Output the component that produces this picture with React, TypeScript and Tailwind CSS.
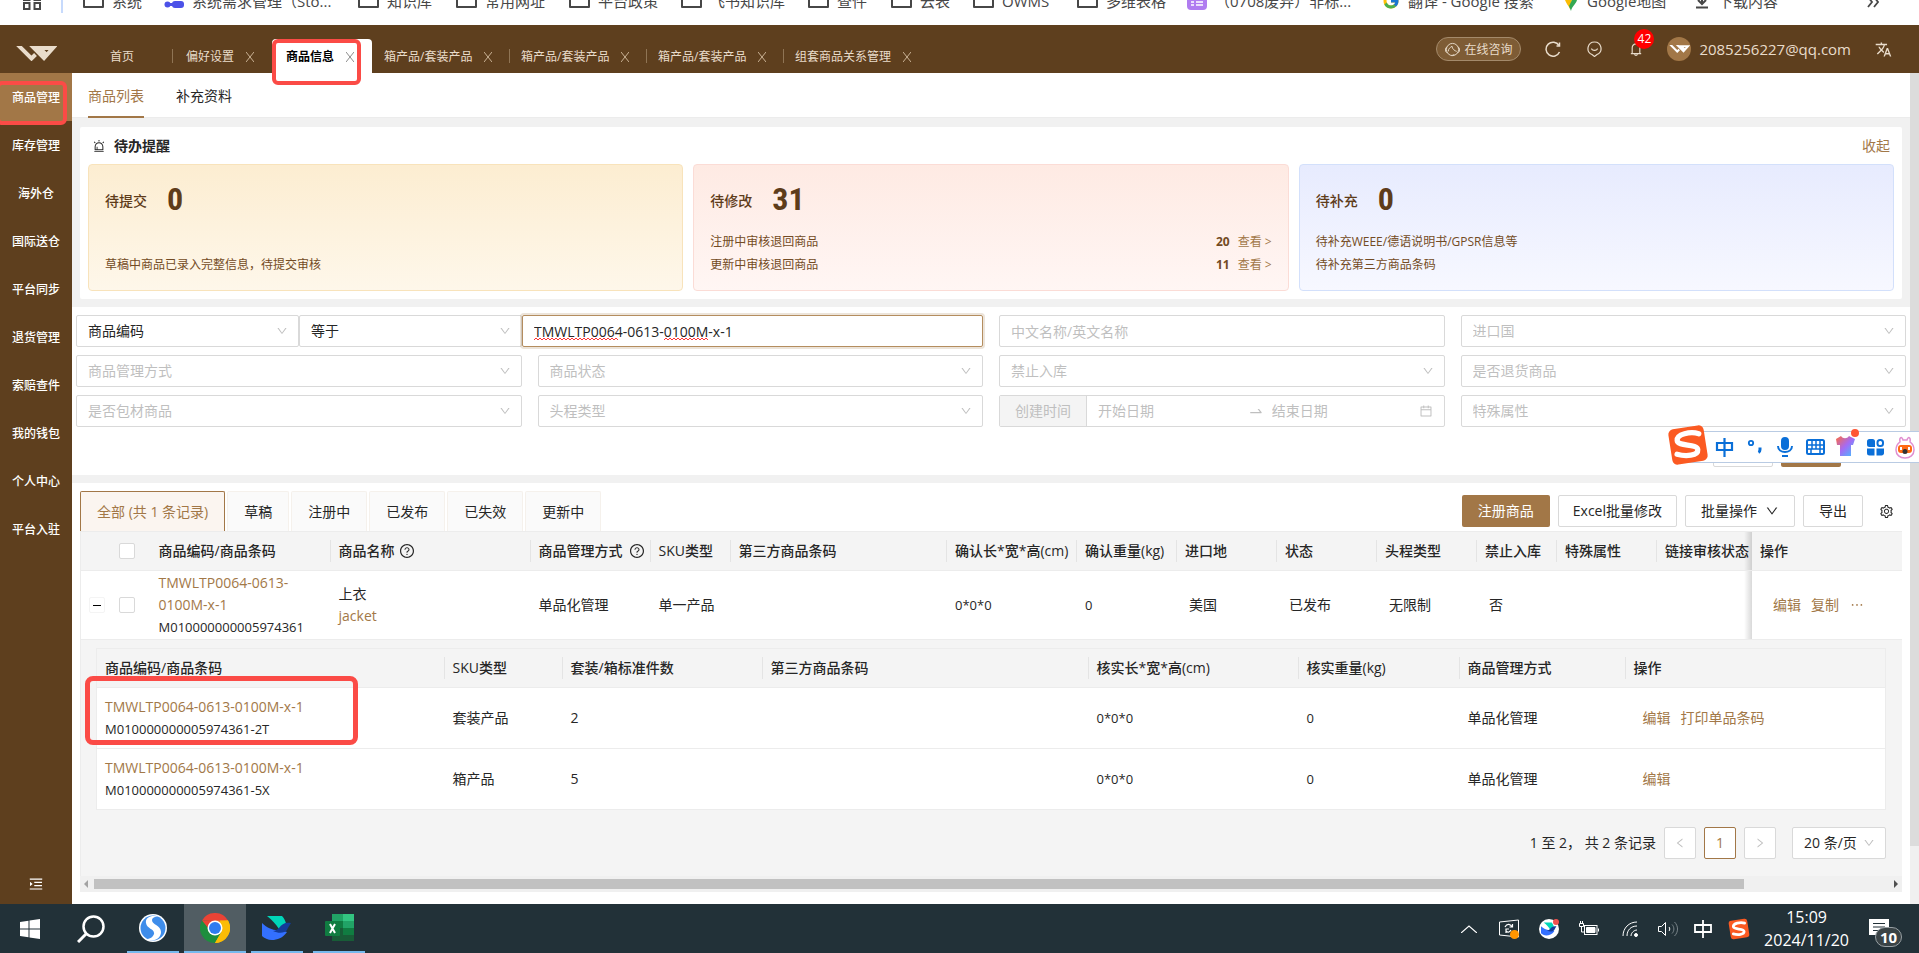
import type { ReactNode } from 'react';
import {
  AiOutlineAlert,
  AiOutlineBell,
  AiOutlineCalendar,
  AiOutlineDown,
  AiOutlineEllipsis,
  AiOutlineLeft,
  AiOutlineMenuUnfold,
  AiOutlineQuestionCircle,
  AiOutlineRight,
  AiOutlineSetting,
  AiOutlineSwapRight,
} from 'react-icons/ai';
import { FcGoogle } from 'react-icons/fc';
import { MdTranslate } from 'react-icons/md';

const sideMenu = [
  '商品管理', '库存管理', '海外仓', '国际送仓', '平台同步',
  '退货管理', '索赔查件', '我的钱包', '个人中心', '平台入驻',
];

const bookmarks = [
  { label: '系统', icon: 'folder', width: 'w-[81px]' },
  { label: '系统需求管理（Sto...', icon: 'flow', width: 'w-[194px]' },
  { label: '知识库', icon: 'folder', width: 'w-[98px]' },
  { label: '常用网址', icon: 'folder', width: 'w-[113px]' },
  { label: '平台政策', icon: 'folder', width: 'w-[112px]' },
  { label: '飞书知识库', icon: 'folder', width: 'w-[127px]' },
  { label: '查件', icon: 'folder', width: 'w-[83px]' },
  { label: '云表', icon: 'folder', width: 'w-[82px]' },
  { label: 'OWMS', icon: 'folder', width: 'w-[104px]' },
  { label: '多维表格', icon: 'folder', width: 'w-[110px]' },
  { label: '（0708废弃）非标...', icon: 'sheet', width: 'w-[195px]' },
  { label: '翻译 - Google 搜索', icon: 'google', width: 'w-[181px]' },
  { label: 'Google地图', icon: 'maps', width: 'w-[131px]' },
  { label: '下载内容', icon: 'download', width: 'w-[110px]' },
];

const pageTabs = [
  { label: '偏好设置', wide: false },
  { label: '商品信息', wide: false, active: true },
  { label: '箱产品/套装产品', wide: true },
  { label: '箱产品/套装产品', wide: true, divider: true },
  { label: '箱产品/套装产品', wide: true, divider: true },
  { label: '组套商品关系管理', wide: true, divider: true },
];

const statusTabs = ['全部 (共 1 条记录)', '草稿', '注册中', '已发布', '已失效', '更新中'];

const childRows = [
  { code: 'TMWLTP0064-0613-0100M-x-1', barcode: 'M010000000005974361-2T', type: '套装产品', count: '2', print: true },
  { code: 'TMWLTP0064-0613-0100M-x-1', barcode: 'M010000000005974361-5X', type: '箱产品', count: '5', print: false },
];

function BookmarkIcon({ name }: { name: string }) {
  if (name === 'google') return <FcGoogle className="size-[18px] shrink-0" />;
  if (name === 'flow') {
    return (
      <svg className="w-5 h-5 shrink-0" viewBox="0 0 20 20" fill="#4c52e8">
        <circle cx="3.5" cy="13.5" r="3" />
        <path d="M5 12h4v3H5z" />
        <rect x="8" y="10" width="12" height="7" rx="3" />
      </svg>
    );
  }
  if (name === 'sheet') {
    return (
      <svg className="w-5 h-5 shrink-0" viewBox="0 0 20 20">
        <rect width="20" height="19" rx="4" fill="#b07cf0" />
        <path d="M4 11h3M9 11h7M4 14h3M9 14h7" stroke="#fff" strokeWidth="1.6" />
      </svg>
    );
  }
  if (name === 'maps') {
    return (
      <svg className="w-4 h-5 shrink-0" viewBox="0 0 16 20">
        <path d="M2 9h7L7 18C5 14 3 12 2 9z" fill="#fbbc04" />
        <path d="M9 9h5c-1 4-5 6-6 11l-2-5z" fill="#34a853" />
      </svg>
    );
  }
  if (name === 'download') {
    return (
      <svg className="w-4 h-5 shrink-0" viewBox="0 0 16 20" fill="none" stroke="#474747" strokeWidth="2">
        <path d="M8 4v9M4 9l4 4 4-4M2 16.500h12" />
      </svg>
    );
  }
  return (
    <svg className="w-[21px] h-5 shrink-0" viewBox="0 0 21 20" fill="none" stroke="#474747" strokeWidth="2">
      <path d="M1 3h7l2 2h10v11H1z" strokeLinejoin="round" />
    </svg>
  );
}

function BrandMark({ className }: { className: string }) {
  return (
    <svg className={className} viewBox="0 0 42 15" fill="none" stroke="currentColor" strokeWidth="4">
      <path d="M1 -3L16.500 12.500L20.500 8.500" />
      <path d="M14 -3L29 12L38 2H24.500L31 8.500" />
    </svg>
  );
}

function CloseIcon({ className }: { className: string }) {
  return (
    <svg className={className} viewBox="0 0 8 10" fill="none" stroke="currentColor" strokeWidth="1">
      <path d="M0 0l8 10M8 0L0 10" />
    </svg>
  );
}

function SogouLogo({ className }: { className: string }) {
  return (
    <svg className={className} viewBox="0 0 40 40">
      <rect x="3" y="3" width="34" height="34" rx="5" fill="#fb5a22" transform="rotate(-9 20 20)" />
      <path
        d="M31 10C23 7 10 9 10 15c0 6 19 4 19 10 0 6-12 6-20 3"
        fill="none"
        stroke="#fff"
        strokeWidth="5"
        strokeLinecap="round"
        transform="rotate(-4 20 20)"
      />
    </svg>
  );
}

function FeishuMark({ className }: { className: string }) {
  return (
    <svg className={className} viewBox="0 0 30 26">
      <path d="M5 1h15c2 2 4 6 4 8l-7 5C14 9 10 5 5 1z" fill="#00d6b9" />
      <path d="M0 8c5 5 12 8 18 7l7 2c-4 6-10 8-15 8-4 0-8-2-10-4z" fill="#3370ff" />
      <path d="M29 8c-6-1-9 1-12 5-2 2-4 3-6 3 6 3 12 2 14-1 1-3 3-5 4-7z" fill="#133c9a" />
    </svg>
  );
}

function Select({ label, value, className = '' }: { label: string; value?: string; className?: string }) {
  return (
    <div className={`relative h-8 ${className}`}>
      <select
        aria-label={label}
        className={`block w-full h-full appearance-none border border-[#d9d9d9] rounded-[2px] bg-white pl-[11px] pr-6 text-sm ${
          value ? 'text-[#262626]' : 'text-[#bfbfbf]'
        }`}
      >
        <option>{value ?? label}</option>
      </select>
      <AiOutlineDown className="absolute right-[11px] top-[10px] size-3 text-[#bfbfbf] pointer-events-none" />
    </div>
  );
}

function TodoCard({ title, count, className, children }: { title: string; count: string; className: string; children: ReactNode }) {
  return (
    <div className={`h-[127px] rounded-[4px] border bg-linear-to-b px-4 pt-3.5 pb-3.5 flex flex-col justify-between ${className}`}>
      <div className="h-10 flex items-center gap-5 text-[#5e3c1a]">
        <span className="text-sm font-medium pt-1">{title}</span>
        <span className="font-['Roboto_Condensed','Liberation_Sans_Narrow','Open_Sans_Condensed','Roboto'] text-[32px] font-bold leading-10">{count}</span>
      </div>
      <ul className="text-xs leading-[23px] text-[#734b24]">{children}</ul>
    </div>
  );
}

function Th({ children, last = false }: { children?: ReactNode; last?: boolean }) {
  return (
    <th className="p-0 border-y border-[#ececec] bg-[#f4f4f4] font-medium text-left">
      <div className={`h-[22px] my-2 px-2 leading-[22px] whitespace-nowrap flex items-center gap-1 ${last ? '' : 'border-r border-[#e4e4e4]'}`}>
        {children}
      </div>
    </th>
  );
}

// Shade cast by the pinned action column onto the cells left of it
function PinnedShade() {
  return <span className="absolute -left-2 top-0 w-2 h-full bg-linear-to-l from-black/15 to-transparent pointer-events-none" />;
}

function TopBar() {
  return (
    <header className="h-12 bg-[#5e3f1e] text-[#e9dccb] flex">
      <div className="w-[72px] shrink-0 flex items-center justify-center">
        <BrandMark className="w-[42px] h-[15px] mt-2" />
      </div>
      <nav className="flex items-end text-xs">
        <a href="#home" className="w-[100px] h-[34px] pl-[38px] pt-0.5 flex items-center">首页</a>
        {pageTabs.map((tab, i) => (
          <div
            key={i}
            className={`relative h-[34px] pt-0.5 flex items-center gap-3 ${tab.wide ? 'w-[137px] pl-3' : 'w-[100px] pl-3.5'} ${
              tab.active ? 'bg-white text-black font-bold rounded-t-[4px]' : ''
            }`}
          >
            {(i === 0 || tab.divider) && <span className="absolute left-0 top-[10px] h-3.5 w-px bg-[#8f7454]" />}
            <a href={`#tab-${i}`}>{tab.label}</a>
            <button aria-label={`关闭${tab.label}`}>
              <CloseIcon className={`w-2 h-2.5 ${tab.active ? 'text-[#8c8c8c]' : 'text-[#c9b294]'}`} />
            </button>
            {tab.active && (
              <span className="absolute left-0 top-0 z-10 w-[89px] h-[46px] border-4 border-[#fb4b46] rounded-md pointer-events-none" />
            )}
          </div>
        ))}
      </nav>
      <div className="ml-auto flex items-center pr-[27px]">
        <button className="h-6 px-2 rounded-full border border-[#a48a6b] bg-[#7e5c35] text-xs flex items-center gap-1">
          <svg className="size-[15px]" viewBox="0 0 16 16" fill="none" stroke="currentColor">
            <circle cx="8" cy="8" r="6.500" />
            <path d="M2 5.500C.5 6 .5 7 .5 8.500S1 11 2.500 11.500M14 5.500c1.500.5 1.500 1.500 1.500 3s-.5 2.500-2 3M3.500 10c0-3 2-4 4-5.500 0 3 3 5 5 5.500M7 14.500l3-1" />
          </svg>
          <span className="pt-0.5">在线咨询</span>
        </button>
        <button aria-label="刷新" className="ml-6">
          <svg className="size-4" viewBox="0 0 16 16" fill="none" stroke="currentColor" strokeWidth="1.500">
            <path d="M14 4.500A7 7 0 1 0 14.500 11" />
            <path d="M14.500 1.500v3.500h-3" />
          </svg>
        </button>
        <button aria-label="反馈" className="ml-[26px]">
          <svg className="w-[15px] h-4" viewBox="0 0 15 16" fill="none" stroke="currentColor" strokeWidth="1.200">
            <path d="M7.500 1a6.500 6.500 0 0 1 2.500 12.500L7.500 15.500l-2.500-2A6.500 6.500 0 0 1 7.500 1z" />
            <path d="M4.500 7.500c.5 2.500 5.500 2.500 6 0" />
          </svg>
        </button>
        <button aria-label="消息" className="relative ml-[26px]">
          <AiOutlineBell className="size-4" />
          <span className="absolute left-[6px] -top-3 size-5 rounded-full bg-[#ff0000] text-white text-xs leading-5 text-center">42</span>
        </button>
        <span className="ml-[23px] size-6 rounded-full bg-[#a27747] text-white flex items-center justify-center">
          <BrandMark className="w-[21px] h-2" />
        </span>
        <span className="ml-2 text-[15px]">2085256227@qq.com</span>
        <button aria-label="切换语言" className="ml-6">
          <MdTranslate className="size-[17px]" />
        </button>
      </div>
    </header>
  );
}

function Sidebar() {
  return (
    <aside className="w-[72px] shrink-0 bg-[#5e3f1e] text-white text-xs font-medium flex flex-col">
      {sideMenu.map((item, i) => (
        <a
          key={item}
          href={`#menu-${i}`}
          className={`relative h-12 pt-0.5 flex items-center justify-center ${i === 0 ? 'bg-[#a27747]' : ''}`}
        >
          {item}
          {i === 0 && (
            <span className="absolute -left-1 top-2 w-[71px] h-11 border-4 border-[#fb4b46] rounded-md pointer-events-none" />
          )}
        </a>
      ))}
      <button aria-label="展开菜单" className="mt-auto mb-3 self-center">
        <AiOutlineMenuUnfold className="size-4" />
      </button>
    </aside>
  );
}

function TodoPanel() {
  return (
    <section className="mx-2 mt-[9px] px-2 pb-2 bg-white rounded-[2px]">
      <div className="h-[37px] px-1 flex items-center justify-between text-sm">
        <h2 className="flex items-center gap-2 font-bold">
          <AiOutlineAlert className="size-3.5" />
          待办提醒
        </h2>
        <button className="text-[#a27848]">收起</button>
      </div>
      <div className="grid grid-cols-3 gap-[10px]">
        <TodoCard title="待提交" count="0" className="from-[#fcedd1] to-[#fef7ea] border-[#f8e3bb]">
          <li>草稿中商品已录入完整信息，待提交审核</li>
        </TodoCard>
        <TodoCard title="待修改" count="31" className="from-[#feeae3] to-[#fff6f4] border-[#fbdcd6]">
          <li className="flex">
            注册中审核退回商品<b className="ml-auto mr-2 font-bold">20</b>
            <a href="#rejected" className="text-[#a27848]">查看 &gt;</a>
          </li>
          <li className="flex">
            更新中审核退回商品<b className="ml-auto mr-2 font-bold">11</b>
            <a href="#updated" className="text-[#a27848]">查看 &gt;</a>
          </li>
        </TodoCard>
        <TodoCard title="待补充" count="0" className="from-[#e7ebfe] to-[#f7f8ff] border-[#d3e0fb]">
          <li>待补充WEEE/德语说明书/GPSR信息等</li>
          <li>待补充第三方商品条码</li>
        </TodoCard>
      </div>
    </section>
  );
}

function Filters() {
  return (
    <form className="mt-2 px-1 py-2 bg-white">
      <div className="grid grid-cols-4 gap-x-4 gap-y-2">
        <div className="col-span-2 flex">
          <Select label="查询字段" value="商品编码" className="w-[223px]" />
          <Select label="条件" value="等于" className="w-[223px]" />
          <div className="relative flex-1">
            <input
              aria-label="商品编码"
              defaultValue="TMWLTP0064-0613-0100M-x-1"
              className="w-full h-8 px-[11px] text-sm text-[#262626] border border-[#b48d5f] rounded-[2px] outline-2 outline-[#a27747]/20"
            />
            <svg className="absolute left-3 top-[22px] w-44 h-1 pointer-events-none" viewBox="0 0 176 4" fill="none" stroke="#f33">
              <path d="M0 3l2-2 2 2 2-2 2 2 2-2 2 2 2-2 2 2 2-2 2 2 2-2 2 2 2-2 2 2 2-2 2 2 2-2 2 2 2-2 2 2 2-2 2 2 2-2 2 2 2-2 2 2 2-2 2 2 2-2 2 2 2-2 2 2 2-2 2 2 2-2 2 2 2-2 2 2 2-2 2 2 2-2 2 2" />
              <path d="M130 3l2-2 2 2 2-2 2 2 2-2 2 2 2-2 2 2 2-2 2 2 2-2 2 2 2-2 2 2 2-2 2 2 2-2 2 2 2-2 2 2 2-2 2 2" />
            </svg>
          </div>
        </div>
        <input
          aria-label="中文名称/英文名称"
          placeholder="中文名称/英文名称"
          className="h-8 px-[11px] text-sm border border-[#d9d9d9] rounded-[2px] placeholder:text-[#bfbfbf]"
        />
        <Select label="进口国" />
        <Select label="商品管理方式" />
        <Select label="商品状态" />
        <Select label="禁止入库" />
        <Select label="是否退货商品" />
        <Select label="是否包材商品" />
        <Select label="头程类型" />
        <div className="h-8 flex items-center border border-[#d9d9d9] rounded-[2px] text-sm text-[#bfbfbf]">
          <span className="h-full px-[15px] leading-[30px] bg-[#f4f4f4] border-r border-[#d9d9d9]">创建时间</span>
          <input aria-label="开始日期" placeholder="开始日期" className="min-w-0 flex-1 px-[11px] placeholder:text-[#bfbfbf]" />
          <AiOutlineSwapRight className="size-4 shrink-0" />
          <input aria-label="结束日期" placeholder="结束日期" className="min-w-0 flex-1 px-2 placeholder:text-[#bfbfbf]" />
          <AiOutlineCalendar className="size-3.5 mr-[11px] shrink-0" />
        </div>
        <Select label="特殊属性" />
      </div>
      <div className="mt-2 mr-[65px] flex justify-end gap-2 text-sm">
        <button type="reset" className="w-[60px] h-8 border border-[#d9d9d9] rounded-[2px]">重置</button>
        <button type="submit" className="w-[60px] h-8 bg-[#a27747] text-white rounded-[2px]">查询</button>
      </div>
    </form>
  );
}

function ChildTable() {
  return (
    <table className="w-full table-fixed bg-white border-x border-[#ececec] text-sm">
      <colgroup>
        <col className="w-[348px]" />
        <col className="w-[118px]" />
        <col className="w-[200px]" />
        <col />
        <col className="w-[210px]" />
        <col className="w-[161px]" />
        <col className="w-[166px]" />
        <col className="w-[260px]" />
      </colgroup>
      <thead>
        <tr>
          <Th>商品编码/商品条码</Th>
          <Th>SKU类型</Th>
          <Th>套装/箱标准件数</Th>
          <Th>第三方商品条码</Th>
          <Th>核实长*宽*高(cm)</Th>
          <Th>核实重量(kg)</Th>
          <Th>商品管理方式</Th>
          <Th last>操作</Th>
        </tr>
      </thead>
      <tbody>
        {childRows.map((row, i) => (
          <tr key={row.barcode} className="h-[61px] border-b border-[#ececec]">
            <td className="relative px-2 leading-[22px]">
              <a href="#product" className="block text-[#a27848]">{row.code}</a>
              <p className="text-[13px] leading-[22px]">{row.barcode}</p>
              {i === 0 && (
                <span className="absolute -left-3 -top-3 w-[273px] h-[69px] border-[5px] border-[#fb4b46] rounded-lg pointer-events-none" />
              )}
            </td>
            <td className="px-2">{row.type}</td>
            <td className="px-2">{row.count}</td>
            <td />
            <td className="px-2 text-[13px]">0*0*0</td>
            <td className="px-2 text-[13px]">0</td>
            <td className="px-2">单品化管理</td>
            <td className="px-[17px] text-[#a27848]">
              <a href="#edit">编辑</a>
              {row.print && <a href="#print" className="ml-2.5">打印单品条码</a>}
            </td>
          </tr>
        ))}
      </tbody>
    </table>
  );
}

function ProductTable() {
  return (
    <table className="w-full table-fixed border-l border-[#ececec] text-sm text-[#262626]">
      <colgroup>
        <col className="w-[30px]" />
        <col className="w-10" />
        <col className="w-[180px]" />
        <col className="w-[200px]" />
        <col className="w-[120px]" />
        <col className="w-20" />
        <col />
        <col className="w-[130px]" />
        <col className="w-[100px]" />
        <col className="w-[100px]" />
        <col className="w-[100px]" />
        <col className="w-[100px]" />
        <col className="w-20" />
        <col className="w-[100px]" />
        <col className="w-[95px]" />
        <col className="w-[150px]" />
      </colgroup>
      <thead>
        <tr>
          <Th last />
          <Th last>
            <input type="checkbox" aria-label="全选" className="size-4 shrink-0 appearance-none bg-white border border-[#d9d9d9] rounded-[2px]" />
          </Th>
          <Th>商品编码/商品条码</Th>
          <Th>商品名称<AiOutlineQuestionCircle className="size-4 shrink-0" /></Th>
          <Th>商品管理方式<AiOutlineQuestionCircle className="size-4 ml-0.5 shrink-0" /></Th>
          <Th>SKU类型</Th>
          <Th>第三方商品条码</Th>
          <Th>确认长*宽*高(cm)</Th>
          <Th>确认重量(kg)</Th>
          <Th>进口地</Th>
          <Th>状态</Th>
          <Th>头程类型</Th>
          <Th>禁止入库</Th>
          <Th>特殊属性</Th>
          <Th last>链接审核状态</Th>
          <th className="relative px-2 text-left font-medium border-y border-[#ececec] bg-[#f4f4f4]">
            <PinnedShade />
            操作
          </th>
        </tr>
      </thead>
      <tbody>
        <tr className="h-[69px] border-b border-[#ececec]">
          <td className="px-2">
            <button aria-label="收起" className="size-4 flex items-center justify-center border border-[#f4f4f4] rounded-[2px]">
              <span className="w-2 h-px bg-black" />
            </button>
          </td>
          <td className="px-2">
            <input type="checkbox" aria-label="选择商品" className="block size-4 appearance-none bg-white border border-[#d9d9d9] rounded-[2px]" />
          </td>
          <td className="px-2 leading-[22px]">
            <a href="#product" className="block text-[#a27848]">TMWLTP0064-0613-<br />0100M-x-1</a>
            <p className="text-[13px] leading-[22px]">M010000000005974361</p>
          </td>
          <td className="px-2 leading-[22px]">
            <p>上衣</p>
            <p className="text-[#a27848]">jacket</p>
          </td>
          <td className="px-2">单品化管理</td>
          <td className="px-2">单一产品</td>
          <td />
          <td className="px-2 text-[13px]">0*0*0</td>
          <td className="px-2 text-[13px]">0</td>
          <td className="px-3">美国</td>
          <td className="px-3">已发布</td>
          <td className="px-3">无限制</td>
          <td className="px-3">否</td>
          <td />
          <td />
          <td className="relative pl-[21px] text-[#a27848]">
            <PinnedShade />
            <div className="flex items-center gap-2.5">
              <a href="#edit">编辑</a>
              <a href="#copy">复制</a>
              <button aria-label="更多"><AiOutlineEllipsis className="size-4" /></button>
            </div>
          </td>
        </tr>
        <tr className="bg-[#f4f4f4]">
          <td colSpan={16} className="pl-[15px] pr-4 pt-2 pb-[17px]">
            <ChildTable />
            <div className="mt-[17px] flex items-center justify-end gap-2">
              <span>1 至 2， 共 2 条记录</span>
              <button aria-label="上一页" className="size-8 flex items-center justify-center bg-white border border-[#d9d9d9] rounded-[2px] text-[#bfbfbf]">
                <AiOutlineLeft className="size-3" />
              </button>
              <button className="size-8 bg-white border border-[#a27747] rounded-[2px] font-medium text-[#a27747]">1</button>
              <button aria-label="下一页" className="size-8 flex items-center justify-center bg-white border border-[#d9d9d9] rounded-[2px] text-[#bfbfbf]">
                <AiOutlineRight className="size-3" />
              </button>
              <Select label="每页条数" value="20 条/页" className="w-[94px] ml-2" />
            </div>
          </td>
        </tr>
      </tbody>
    </table>
  );
}

function ProductPanel() {
  return (
    <section className="mt-2 flex-1 bg-white px-2 pt-2">
      <div className="flex items-center justify-between text-sm">
        <div className="flex gap-[2px]">
          {statusTabs.map((tab, i) => (
            <button
              key={tab}
              className={`h-10 px-4 border border-b-0 rounded-t-[2px] ${
                i === 0 ? 'bg-[#fbf5f0] border-[#a27747] text-[#a27747]' : 'bg-[#fafafa] border-[#f5f1ec] text-[#262626]'
              }`}
            >
              {tab}
            </button>
          ))}
        </div>
        <div className="flex items-center gap-2 pr-2">
          <button className="h-8 px-4 bg-[#a27747] text-white rounded-[2px]">注册商品</button>
          <button className="h-8 px-3.5 border border-[#d9d9d9] rounded-[2px]">Excel批量修改</button>
          <button className="h-8 px-[15px] border border-[#d9d9d9] rounded-[2px] flex items-center gap-2">
            批量操作<AiOutlineDown className="size-3.5" />
          </button>
          <button className="h-8 px-[15px] border border-[#d9d9d9] rounded-[2px]">导出</button>
          <button aria-label="列设置" className="ml-2"><AiOutlineSetting className="size-[15px]" /></button>
        </div>
      </div>
      <ProductTable />
      <div className="h-4 bg-[#f0f0f0] flex items-center gap-[6px] px-1">
        <svg className="w-1 h-2" viewBox="0 0 4 8" fill="#a3a3a3"><path d="M4 0v8L0 4z" /></svg>
        <div className="flex-1">
          <div className="w-[92%] h-2.5 bg-[#c1c1c1]" />
        </div>
        <svg className="w-1 h-2" viewBox="0 0 4 8" fill="#505050"><path d="M0 0v8l4-4z" /></svg>
      </div>
    </section>
  );
}

// Floating input-method bar that sits over the page
function ImeBar() {
  return (
    <div className="absolute right-0 top-[431px] z-20 h-8 w-[236px] pl-8 bg-white border-y border-[#b9cbe3] flex items-center text-[#0a6fd8]">
      <SogouLogo className="absolute -left-4 -top-2 size-[42px]" />
      <svg className="size-[19px]" viewBox="0 0 19 19" fill="none" stroke="currentColor" strokeWidth="2.200">
        <path d="M2 5h15v7H2zM9.500 0v19" />
      </svg>
      <svg className="ml-[13px] w-4 h-4" viewBox="0 0 16 16" fill="none" stroke="currentColor" strokeWidth="1.800">
        <circle cx="4" cy="4" r="2.200" />
        <path d="M13 8.500v2c0 1.500-.5 2.500-1.500 3" strokeWidth="3" />
      </svg>
      <svg className="ml-3.5 w-4 h-5" viewBox="0 0 16 20" fill="none" stroke="currentColor" strokeWidth="2">
        <rect x="5" y="1" width="6" height="11" rx="3" fill="currentColor" />
        <path d="M1 9c0 8 14 8 14 0M5 19h6" />
      </svg>
      <svg className="ml-[13px] w-[19px] h-4" viewBox="0 0 19 16" fill="none" stroke="currentColor" strokeWidth="1.500">
        <rect x="1" y="1" width="17" height="14" rx="1.500" strokeWidth="2" />
        <path d="M1 6h17M1 10h17M6 1v9M10 1v9M14 1v9M5 10v5M14 10v5" />
      </svg>
      <svg className="ml-[10px] w-6 h-7 -mt-2" viewBox="0 0 24 28">
        <defs>
          <linearGradient id="shirt" x1="0" y1="0" x2="1" y2="1">
            <stop offset="0" stopColor="#ff6a3c" />
            <stop offset=".5" stopColor="#a46bf5" />
            <stop offset="1" stopColor="#3fc3ff" />
          </linearGradient>
        </defs>
        <path d="M1 10l5-3c2 3 6 3 8 0l6 3-2 6h-2v11H5V16H2z" fill="url(#shirt)" />
        <circle cx="20" cy="4" r="4" fill="#ff5634" />
      </svg>
      <svg className="ml-2 size-[17px]" viewBox="0 0 17 17" fill="currentColor">
        <path d="M2.500 0h3A2.500 2.500 0 0 1 8 2.500V8H2.500A2.500 2.500 0 0 1 0 5.500v-3A2.500 2.500 0 0 1 2.500 0zM0 9.500h7.500v7h-5A2.500 2.500 0 0 1 0 14zM9.500 9.500H17v5a2.500 2.500 0 0 1-2.500 2h-5z" />
        <rect x="10.500" y="1" width="5.500" height="6" rx="2.500" fill="none" stroke="currentColor" strokeWidth="2" />
      </svg>
      <svg className="ml-[11px] w-5 h-6" viewBox="0 0 20 24">
        <path d="M5 7C4 2 7 1 8 5h4c1-4 4-3 3 2 3 2 4 5 4 8 0 5-4 8-9 8s-9-3-9-8c0-3 1-6 4-8z" fill="#fff" stroke="#e08fd0" strokeWidth="1.500" />
        <rect x="3" y="10" width="14" height="8" rx="3" fill="#ff6a13" />
        <path d="M6 12v3M14 12v3" stroke="#fff" strokeWidth="2" />
        <circle cx="10" cy="16.500" r="2.500" fill="#333" />
      </svg>
    </div>
  );
}

function TaskButton({ label, active = false, children }: { label: string; active?: boolean; children: ReactNode }) {
  return (
    <button aria-label={label} className={`w-[62px] h-full flex flex-col ${active ? 'bg-[#515d63]' : 'px-[5px]'}`}>
      <span className="flex-1 w-full flex items-center justify-center">{children}</span>
      <span className="w-full h-[2px] bg-[#76b9ed]" />
    </button>
  );
}

function Taskbar() {
  return (
    <footer className="h-[49px] bg-[#223138] text-white flex items-center">
      <button aria-label="开始" className="w-[60px] flex justify-center">
        <svg className="size-5" viewBox="0 0 20 20" fill="#fff">
          <path d="M0 3l8.500-1.300v7.800H0zM9.500 1.500L20 0v9.500H9.500zM0 10.500h8.500v7.800L0 17zM9.500 10.500H20V20L9.500 18.500z" />
        </svg>
      </button>
      <button aria-label="搜索" className="w-[62px] flex justify-center">
        <svg className="size-7" viewBox="0 0 28 28" fill="none" stroke="#fff" strokeWidth="2.500">
          <circle cx="16.500" cy="11.500" r="10" />
          <path d="M9 19l-8 8" strokeWidth="3" />
        </svg>
      </button>
      <TaskButton label="浏览器">
        <svg className="size-7" viewBox="0 0 28 28">
          <circle cx="14" cy="14" r="14" fill="#fff" />
          <circle cx="14" cy="14" r="12.500" fill="#3f8dea" />
          <path d="M20 3C12 0 6 4 7 9c1 6 9 6 8 11-1 3-4 5-8 5 8 4 15-1 15-7 0-7-9-7-9-12 0-2 3-4 7-3z" fill="#fff" />
        </svg>
      </TaskButton>
      <TaskButton label="Chrome" active>
        <svg className="size-[30px]" viewBox="0 0 30 30">
          <path d="M15 15L2 7.500A15 15 0 0 1 28 7.500z" fill="#ea4335" />
          <path d="M15 15l13-7.500A15 15 0 0 1 15 30z" fill="#fbbc05" />
          <path d="M15 15v15A15 15 0 0 1 2 7.500z" fill="#1e8e3e" />
          <path d="M15 7.500h13l-6 11.500z" fill="#fbbc05" />
          <path d="M21.500 18.700L15 30l-6-11z" fill="#1e8e3e" />
          <path d="M2 7.500l6.500 11.300L14 8z" fill="#1e8e3e" />
          <path d="M2 7.500h26L15 9l-6 7z" fill="#ea4335" />
          <path d="M22 18L15 30c8 0 15-7 15-15 0-3-1-5-2-7.500h-8z" fill="#fbbc05" />
          <circle cx="15" cy="15" r="7.500" fill="#fff" />
          <circle cx="15" cy="15" r="6" fill="#2f7bf0" />
        </svg>
      </TaskButton>
      <TaskButton label="飞书">
        <FeishuMark className="w-[30px] h-[26px]" />
      </TaskButton>
      <TaskButton label="Excel">
        <svg className="w-[29px] h-7" viewBox="0 0 29 28">
          <path d="M7 0h11v7H7z" fill="#21a366" />
          <path d="M18 0h11v7H18z" fill="#33c481" />
          <path d="M7 7h11v7H7z" fill="#107c41" />
          <path d="M18 7h11v7H18z" fill="#21a366" />
          <path d="M7 14h11v7H7zM7 21h22v6H7z" fill="#185c37" />
          <path d="M18 14h11v7H18z" fill="#107c41" />
          <rect y="7" width="15" height="15" rx="1" fill="#107c41" />
          <path d="M5 10l5 9M10 10l-5 9" stroke="#fff" strokeWidth="2" />
        </svg>
      </TaskButton>

      <div className="ml-auto flex items-center">
        <svg className="w-4 h-2" viewBox="0 0 16 8" fill="none" stroke="#fff" strokeWidth="1.200"><path d="M0 8l8-7 8 7" /></svg>
        <svg className="ml-[22px] size-5" viewBox="0 0 20 20" fill="none" stroke="#fff">
          <path d="M.5 3L19.500 1v17L.5 16z" />
          <path d="M6 8c2-4 6-3 7 0M13.500 5v3h-3M7 14v-4h3M7 12c2 2 4 1 5-1" strokeWidth="1.200" />
          <circle cx="15.500" cy="15.500" r="4.500" fill="#ff9500" stroke="none" />
        </svg>
        <span className="relative ml-5 size-5 rounded-full bg-white flex items-center justify-center">
          <FeishuMark className="w-4 h-3.5" />
          <span className="absolute right-0 top-0 size-1.5 rounded-full bg-[#f0524f]" />
        </span>
        <svg className="ml-5 w-5 h-4" viewBox="0 0 20 16" fill="none" stroke="#fff">
          <rect x="5.500" y="4.500" width="12.500" height="9" />
          <path d="M7.500 6.500h8.500v5H7.500z" fill="#fff" />
          <path d="M19.500 7.500v3M.5 2.500h4v3h-4zM1.500 0v2M3.500 0v2M2.500 6v5h2.500" />
        </svg>
        <svg className="ml-[23px] size-4" viewBox="0 0 16 16" fill="none" stroke="#fff">
          <path d="M1 15C1 7 7 1 15 1M5 15c0-6 4-10 10-10M9 15c0-3 3-6 6-6" />
          <circle cx="14" cy="14" r="1.500" fill="#fff" />
        </svg>
        <svg className="ml-5 w-5 h-4" viewBox="0 0 20 16" fill="none" stroke="#fff">
          <path d="M.5 5.500h3l4-4v13l-4-4h-3zM11 6c1 1 1 3 0 4" />
          <path d="M14 3.500c2.500 2.500 2.500 6.500 0 9M16.500 1c4 4 4 10 0 14" stroke="#7b868b" />
        </svg>
        <svg className="ml-4 size-[18px]" viewBox="0 0 18 18" fill="none" stroke="#fff" strokeWidth="1.800">
          <path d="M1 5h16v7H1zM9 0v18" />
        </svg>
        <SogouLogo className="ml-4 size-[22px]" />
        <p className="ml-3.5 text-base leading-[23px] text-center">15:09<br />2024/11/20</p>
        <div className="relative ml-5 mr-[30px]">
          <svg className="w-5 h-5" viewBox="0 0 20 20">
            <path d="M0 0h20v16h-8l-4 4v-4H0z" fill="#fff" />
            <path d="M4 4.500h12M4 8h12M4 11.500h8" stroke="#223138" />
          </svg>
          <span className="absolute left-1.5 top-2 w-[27px] h-5 rounded-full border border-[#98a0a4] bg-[#3a4346] text-[15px] leading-[18px] font-bold text-center">10</span>
        </div>
      </div>
    </footer>
  );
}

export default function App() {
  return (
    <div className="relative min-h-screen flex flex-col overflow-hidden bg-[#f1f1f1] text-[#262626] font-['Open_Sans','Noto_Sans_CJK_SC',sans-serif]">
      <div className="h-[25px] bg-white overflow-hidden">
        <div className="h-6 -mt-[11px] pl-[23px] pr-10 flex items-center text-[15px] text-[#474747]">
          <svg className="w-[18px] h-5 shrink-0" viewBox="0 0 18 20" fill="none" stroke="#474747" strokeWidth="2">
            <path d="M1 12h5.500v6H1zM11.500 12H17v6h-5.500zM1 3h5.500v6H1zM11.500 3H17v6h-5.500z" />
          </svg>
          <span className="ml-5 mr-5 w-[2px] h-full shrink-0 bg-[#c7dafc]" />
          {bookmarks.map((item) => (
            <a key={item.label} href="#bookmark" className={`${item.width} shrink-0 flex items-center gap-2 whitespace-nowrap`}>
              <BookmarkIcon name={item.icon} />
              {item.label}
            </a>
          ))}
          <svg className="ml-auto w-3 h-5" viewBox="0 0 12 20" fill="none" stroke="#474747" strokeWidth="1.800">
            <path d="M1 6l4 5-4 5M7 6l4 5-4 5" />
          </svg>
        </div>
      </div>

      <TopBar />

      <div className="flex-1 flex">
        <Sidebar />
        <main className="flex-1 min-w-0 flex flex-col">
          <nav className="h-[45px] pl-4 flex gap-8 bg-white border-b border-[#ececec] text-sm">
            <a href="#list" className="h-[45px] pt-[13px] border-b-2 border-[#a27747] text-[#a27747]">商品列表</a>
            <a href="#extra" className="pt-[13px]">补充资料</a>
          </nav>
          <TodoPanel />
          <Filters />
          <ProductPanel />
        </main>
        <div className="w-[9px] shrink-0 bg-[#f0f0f0]">
          <div className="h-[93%] bg-[#dcdcdc]" />
        </div>
      </div>

      <Taskbar />
      <ImeBar />
    </div>
  );
}
